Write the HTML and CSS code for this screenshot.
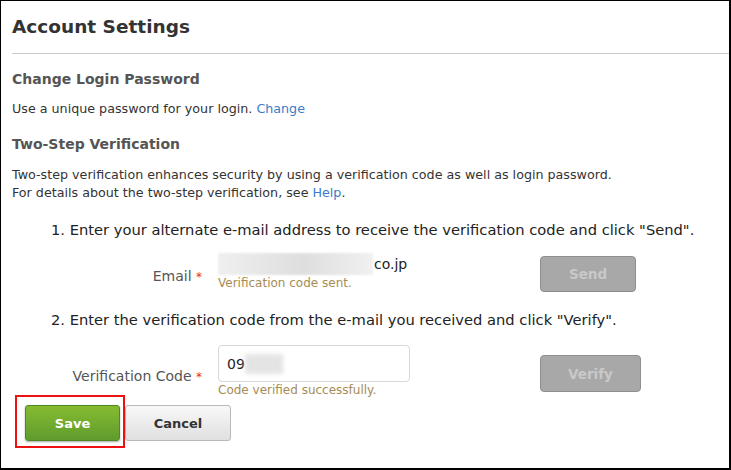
FILE: index.html
```html
<!DOCTYPE html>
<html>
<head>
<meta charset="utf-8">
<link rel="stylesheet" href="styles.css">
</head>
<body>
<div class="frame">
  <div class="header"><h1 class="title">Account Settings</h1></div>
  <div class="content">
    <h2 class="sec">Change Login Password</h2>
    <p class="txt">Use a unique password for your login. <a class="link" href="#">Change</a></p>
    <h2 class="sec sec2">Two-Step Verification</h2>
    <p class="txt para">Two-step verification enhances security by using a verification code as well as login password.<br>For details about the two-step verification, see <a class="link" href="#">Help</a>.</p>
  </div>
  <p class="step step1">1. Enter your alternate e-mail address to receive the verification code and click "Send".</p>
  <div class="row row-email">
    <div class="label lab-email">Email <span class="req">*</span></div>
    <div class="field">
      <div class="emailval"><span class="blur"></span><span class="dom">co.jp</span></div>
      <div class="msg">Verification code sent.</div>
    </div>
    <div class="btn-gray btn-send">Send</div>
  </div>
  <p class="step step2">2. Enter the verification code from the e-mail you received and click "Verify".</p>
  <div class="row row-code">
    <div class="label lab-code">Verification Code <span class="req">*</span></div>
    <div class="field">
      <div class="input"><span class="code">09</span><span class="blur blur2"></span></div>
      <div class="msg">Code verified successfully.</div>
    </div>
    <div class="btn-gray btn-verify">Verify</div>
  </div>
  <div class="actions">
    <div class="highlight"><div class="btn-save">Save</div></div>
    <div class="btn-cancel">Cancel</div>
  </div>
</div>
</body>
</html>
```
FILE: styles.css
```css
html, body { margin: 0; padding: 0; background: #fff; }
body { font-family: "DejaVu Sans", Verdana, sans-serif; color: #333; }
.frame {
  width: 731px; height: 470px; box-sizing: border-box;
  border-top: 1px solid #000; border-left: 1px solid #000;
  border-right: 2px solid #000; border-bottom: 2px solid #000;
  overflow: hidden;
}
.header { margin-left: 11px; border-bottom: 1px solid #ccc; height: 53px; box-sizing: border-box; }
.title { margin: 0; padding-top: 14px; font-size: 18.5px; line-height: 24px; font-weight: bold; color: #333; }
.content { padding-left: 11px; }
.sec { margin: 0; font-size: 14px; line-height: 20px; font-weight: bold; color: #555; padding-top: 15px; }
.sec2 { padding-top: 16px; }
.txt { margin: 0; font-size: 12.7px; line-height: 18px; color: #333; }
.content > .txt { margin-top: 11px; }
.content > .para { margin-top: 12px; }
.link { color: #3a7bc8; text-decoration: none; }
.step { margin: 0; padding-left: 50px; font-size: 14.7px; line-height: 20px; color: #222; }
.step1 { margin-top: 18px; }
.step2 { margin-top: 18px; }
.row { display: flex; align-items: flex-start; }
.row-email { margin-top: 13px; }
.row-code { margin-top: 15px; }
.label { width: 201px; text-align: right; font-size: 14px; line-height: 20px; color: #555; margin-right: 16px; }
.lab-email { margin-top: 13px; }
.lab-code { margin-top: 21px; }
.req { color: #e03030; font-size: 12px; }
.field { width: 322px; }
.emailval { display: flex; align-items: center; height: 22px; }
.blur { display: inline-block; width: 155px; height: 22px; background: linear-gradient(90deg, #efefef, #e6e6e6 30%, #dedede 55%, #e8e8e8 80%, #f1f1f1); filter: blur(1px); }
.dom { font-size: 14px; color: #222; margin-left: 1px; }
.msg { font-size: 12px; line-height: 16px; color: #a58c55; }
.input { display: flex; align-items: center; width: 192px; height: 37px; box-sizing: border-box; border: 1px solid #d8d8d8; border-radius: 4px; padding-left: 8px; }
.code { font-size: 14px; color: #222; }
.blur2 { width: 38px; height: 20px; margin-left: 0; background: #e4e4e4; filter: blur(2px); }
.btn-gray {
  box-sizing: border-box; height: 36px; border: 1px solid #8f8f8f; border-radius: 4px;
  background: #a8a8a8; color: #c9c9c9; font-weight: bold; font-size: 13.5px;
  display: flex; align-items: center; justify-content: center;
}
.btn-send { width: 96px; margin-top: 3px; }
.btn-verify { width: 101px; margin-top: 10px; height: 37px; }
.actions { display: flex; align-items: flex-start; margin-top: -3px; padding-left: 14px; }
.highlight { border: 2px solid #ee1111; padding: 8px 3px 5px 8px; }
.btn-save {
  box-sizing: border-box; width: 95px; height: 36px; border: 1px solid #4e8a24; border-radius: 3px;
  background: linear-gradient(#86bb30, #5f9c2e); color: #fff; font-weight: bold; font-size: 13px;
  display: flex; align-items: center; justify-content: center;
  box-shadow: 0 1px 2px rgba(0,0,0,0.35);
}
.btn-cancel {
  box-sizing: border-box; width: 106px; height: 36px; margin-top: 10px; border: 1px solid #b9b9b9; border-radius: 3px;
  background: linear-gradient(#f8f8f8, #e0e0e0); color: #333; font-weight: bold; font-size: 13px;
  display: flex; align-items: center; justify-content: center;
}
```
